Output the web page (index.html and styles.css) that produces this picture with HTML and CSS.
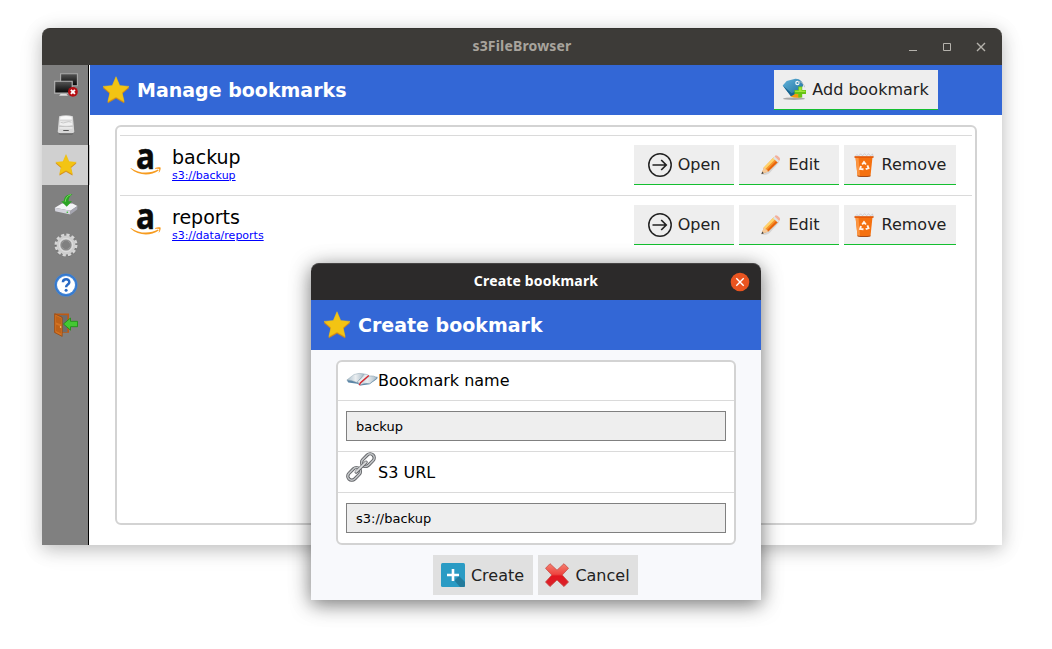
FILE: index.html
```html
<!DOCTYPE html>
<html lang="en">
<head>
<meta charset="utf-8">
<title>s3FileBrowser</title>
<link rel="stylesheet" href="styles.css">
</head>
<body>
<svg class="defs" width="0" height="0">
  <defs>
    <linearGradient id="gScreen" x1="0" y1="0" x2="0" y2="1"><stop offset="0" stop-color="#555"/><stop offset="1" stop-color="#050505"/></linearGradient>
    <linearGradient id="gOrange" x1="0" y1="0" x2="1" y2="1"><stop offset="0" stop-color="#ffc04a"/><stop offset="1" stop-color="#ee6a10"/></linearGradient>
    <linearGradient id="gTag" x1="0" y1="0" x2="1" y2="1"><stop offset="0" stop-color="#62b4dc"/><stop offset="1" stop-color="#1b6b98"/></linearGradient>
    <linearGradient id="gRed" x1="0" y1="0" x2="0" y2="1"><stop offset="0" stop-color="#f58070"/><stop offset=".46" stop-color="#ee4540"/><stop offset=".54" stop-color="#e2161f"/><stop offset="1" stop-color="#d9232c"/></linearGradient>
    <linearGradient id="gPage" x1="0" y1="0" x2="1" y2="0"><stop offset="0" stop-color="#a9bdca"/><stop offset=".5" stop-color="#eceff1"/><stop offset="1" stop-color="#a5b8c5"/></linearGradient>
  </defs>
  <symbol id="star" viewBox="0 0 28 28">
    <path d="M14 2l3.700 8.600 9.300.8-7 6.100 2.100 9.100L14 22l-8.100 4.600L8 17.500l-7-6.100 9.300-.8z" fill="#d58a14" transform="translate(0 .3)" stroke="#d58a14" stroke-width=".5" stroke-linejoin="round"/>
    <path d="M14 .7l3.700 8.900 9.300.8-7 6.100 2.100 9.100L14 21l-8.100 4.600L8 16.500l-7-6.100 9.300-.8z" fill="#f3c413" stroke="#f3c413" stroke-width=".5" stroke-linejoin="round"/>
  </symbol>
  <symbol id="smile" viewBox="0 0 32 30">
    <path d="M.8 20.900C9 26.600 20 27 28 22.600l.7 1C20.500 29.300 8.500 29 .5 21.600z" fill="#f79c20"/>
    <path d="M25 20.900c2.400-1 4.400-.9 5.600-.4.300 1.700-.4 4-2 5.400.4-1.500.9-2.700.6-3.900-1.200-.5-2.600-.4-4.200-.2z" fill="#f79c20"/>
  </symbol>
  <symbol id="open" viewBox="0 0 24 24">
    <circle cx="12" cy="12" r="11.200" fill="none" stroke="#222" stroke-width="1.500"/>
    <path d="M4.500 12h13.500M13.200 7l5 5-5 5" fill="none" stroke="#222" stroke-width="1.700"/>
  </symbol>
  <symbol id="pencil" viewBox="0 0 24 24">
    <path d="M3 21.500c3 1 6 0 8-2l9-10-2-1z" fill="#bbb" opacity=".5"/>
    <path d="M2.600 20.900l2.200-6.500L15 4l4.500 4.400L9.200 18.600z" fill="url(#gOrange)"/>
    <path d="M4.800 14.400L15 4l1.700 1.700L6.300 16z" fill="#ffd46c"/>
    <path d="M9.200 18.600L19.500 8.400 18 7 7.800 17.200z" fill="#e8640c"/>
    <path d="M2.600 20.900l2.200-6.500c1.200.1 1.500.9 1.700 1.800 1.300.2 2.200.8 2.700 2.400z" fill="#f3c99a"/>
    <path d="M2.400 21.200l.8-2.600 1.700 1.700z" fill="#444"/>
    <path d="M14 5l1.600-1.600 4.600 4.500-1.600 1.600z" fill="#dde3e8"/>
    <path d="M15.600 3.400l.9-.9c1.200-.9 5.200 2.600 4.500 4.300l-.8 1.100z" fill="#f3b09b"/>
  </symbol>
  <symbol id="trash" viewBox="0 0 24 24">
    <path d="M3 3.500l2-2 1.500 1.700L8.500.8l2 2 2-2.200 2 2 2.200-1.800 1.700 2L20.500 1l.8 3z" fill="#eee" stroke="#bdb9bd" stroke-width=".6"/>
    <path d="M3.500 4h17l-2 19q-6.500 1.200-13 0z" fill="#f5700e"/>
    <path d="M3.500 4h3l1.500 19-2.500-.2z" fill="#fb9440"/>
    <path d="M2.500 3.200h19v1.700h-19z" fill="#e65a08"/>
    <path d="M5.500 22.600q6.500 1 13 0l-.1.800q-6.400 1-12.800 0z" fill="#a64a18"/>
    <path d="M10.200 11.500l1.800-2.500 1.900 2.500M15.400 12.400l1.100 2.800-2.800 1M11.500 16.200l-3.400-.3.900-2.900" fill="none" stroke="#fff3e8" stroke-width="1.900"/>
  </symbol>
  <symbol id="tag" viewBox="0 0 24 24">
    <ellipse cx="12" cy="20.700" rx="11" ry="1.200" fill="#8a8a8a" opacity=".7"/>
    <path d="M10 11l10 .5-1 7.800q-5 1.300-10.500-.8z" fill="#f29a12"/>
    <path d="M.7 7.500l4-4.500 8.600-2.200c4-.4 8.300 3.400 7.700 7.200l-5.800 6.500L9 18.200z" fill="url(#gTag)"/>
    <path d="M.7 7.500L9 18.200l6.200-3.700-.5-1.800-5 2.600z" fill="#17648f"/>
    <circle cx="15.400" cy="5" r="2.200" fill="#eef7fb"/><circle cx="15.500" cy="5" r="1.100" fill="#3f8eb5"/>
    <path d="M16 3.300q5.500.8 6.700 6" fill="none" stroke="#b6b9bb" stroke-width=".8"/>
    <path d="M16.300 8.600h3.900v3.500H24v3.800h-3.800v3.700h-3.900v-3.700h-3.800v-3.800h3.800z" fill="#68c414"/>
    <path d="M16.900 9.200h2.700v3.500h3.800v1.200h-10.300v-1.200h3.800z" fill="#a0e53a"/>
  </symbol>
  <symbol id="screens" viewBox="0 0 24 24">
    <path d="M6.600.7h16.800v12H6.600z" fill="url(#gScreen)" stroke="#aaa" stroke-width="1.100"/>
    <path d="M7 20.500h5l2 2.300H5z" fill="#ddd"/>
    <path d="M.7 8.300h17.500v11.800H.7z" fill="url(#gScreen)" stroke="#b5b5b5" stroke-width="1.100"/>
    <circle cx="18.900" cy="18.800" r="4.900" fill="#b50d12"/>
    <path d="M16.900 16.800l4 4m0-4l-4 4" stroke="#fff" stroke-width="1.900"/>
  </symbol>
  <symbol id="drives" viewBox="0 0 24 24">
    <path d="M3.500 19.500l2-1h13l2 1-1.500 2.800H5z" fill="#5c5c5c"/>
    <path d="M4.500 2.500Q12 0 19.500 2.500l1.500 16.500q-.5 2-2.500 2h-13q-2 0-2.500-2z" fill="#d8d8d8"/>
    <path d="M6 3q6-1.800 12 0l.5 3h-13z" fill="#f8f8f8"/>
    <path d="M5.500 7.500q6.500 1.300 13 0l.5 4.500q-7 1.500-14 0z" fill="#efefef"/>
    <path d="M6 9q3 1.500 6 0 3-1.300 6 0M4.500 13.300q7.500 1.400 15 0" fill="none" stroke="#bbb" stroke-width=".8"/>
    <path d="M5 15.200h14" stroke="#fafafa"/>
    <path d="M9 18h6" stroke="#555" stroke-width="1.100"/>
  </symbol>
  <symbol id="import" viewBox="0 0 24 24">
    <path d="M.8 14.800L8 10.500h10.500l4.900 2.500-7 4.800z" fill="#f3f3f6"/>
    <path d="M.8 14.800l15.600 3v3.700L1.200 18.300z" fill="#d3d3dc"/>
    <path d="M16.400 17.800l7-4.800-.2 3.500-6.800 5z" fill="#a5a5b0"/>
    <circle cx="13.300" cy="19.300" r=".8" fill="#35c030"/>
    <path d="M18.500 1.200c-4.800-.5-8.500 1.800-8.800 7H7.200l5.500 5.600 5.300-5.600h-3.500c0-2.700 1-5 4-7z" fill="#2ba324"/>
    <path d="M17 1.600c-3.300.8-5.400 3.200-5.800 7.200" fill="none" stroke="#74dc5b"/>
  </symbol>
  <symbol id="gear" viewBox="0 0 24 24">
    <circle cx="12" cy="12.600" r="10.100" fill="none" stroke="#4e4e4e" stroke-width="2.700" stroke-dasharray="3.200 2.088" opacity=".6"/>
    <circle cx="12" cy="12" r="10" fill="none" stroke="#d6d6d6" stroke-width="3" stroke-dasharray="3.200 2.036"/>
    <circle cx="12" cy="12" r="6.900" fill="none" stroke="#cecece" stroke-width="5"/>
    <circle cx="12" cy="12" r="4.800" fill="none" stroke="#8d8d8d" stroke-width="1.600"/>
    <circle cx="12" cy="12" r="6.700" fill="none" stroke="#e4e4e4" stroke-width=".7"/>
  </symbol>
  <symbol id="help" viewBox="0 0 24 24">
    <circle cx="12" cy="12" r="11.500" fill="#4286d8"/>
    <circle cx="12" cy="12" r="9" fill="#fff"/>
    <circle cx="12" cy="12" r="10.600" fill="none" stroke="#2e70c5" stroke-width=".8"/>
    <path d="M8.900 9.300c.2-4 6.500-3.900 6.400-.1 0 2.400-3.200 2.300-3.200 5" fill="none" stroke="#2869c4" stroke-width="2.500"/>
    <circle cx="12.100" cy="17.300" r="1.500" fill="#2869c4"/>
  </symbol>
  <symbol id="exit" viewBox="0 0 24 24">
    <path d="M.5.500h14.500v19.300H.5z" fill="#bd5a14"/>
    <path d="M2.500 2.200h10.800v17H2.500z" fill="#6d6d6d"/>
    <path d="M.7.800l7.500 3.600v19L.7 19.500z" fill="#d37323" stroke="#91430e" stroke-width=".7"/>
    <path d="M2 3l5 2.300v6L2 9.500zM2 11.500l5 2v7L2 18z" fill="#be6118"/>
    <circle cx="6.600" cy="14" r=".8" fill="#ffe08a"/>
    <path d="M9.500 11l7-6v3.300h7v5.400h-7v3.500z" fill="#43c832" stroke="#218e1a" stroke-width=".9"/>
  </symbol>
  <symbol id="book" viewBox="0 0 32 16">
    <path d="M.8 8.300l1.500 2.200 9 1.200 3.200 1.700 9-1.200 7.700-5.400.2-2z" fill="#5b86a7"/>
    <path d="M.8 8L8 2.500Q13 .5 18.500 2l-7.400 8.500Q6 8.200.8 8z" fill="url(#gPage)" stroke="#8299a8" stroke-width=".4"/>
    <path d="M11.100 10.600L18.500 2q3.500.3 5 2 4-.7 7.800 1.700l-7.600 6q-5-1.100-9.400 1.400z" fill="url(#gPage)" stroke="#7f9bad" stroke-width=".5"/>
    <path d="M12 9.500l8.200-6.800 2.600 1.200-8.400 8.600z" fill="#e9ecee"/>
    <path d="M23.500 4.100l-8.900 7.200" stroke="#96a6b2" stroke-width=".6"/>
    <path d="M22.800 3.400l-8.500 7.500-.9 2.300" fill="none" stroke="#d7252d" stroke-width="1.300"/>
  </symbol>
  <symbol id="chain" viewBox="0 0 30 30">
    <g transform="rotate(-45 15 15)" fill="none">
      <rect x="-2" y="11" width="14.500" height="8" rx="4" stroke="#606266" stroke-width="3.300"/>
      <rect x="-2" y="11" width="14.500" height="8" rx="4" stroke="#c0c3c5" stroke-width="1.600"/>
      <rect x="17.500" y="11" width="14.500" height="8" rx="4" stroke="#606266" stroke-width="3.300"/>
      <rect x="17.500" y="11" width="14.500" height="8" rx="4" stroke="#c0c3c5" stroke-width="1.600"/>
      <path d="M8 15.200h14" stroke="#606266" stroke-width="3.300" stroke-linecap="round"/>
      <path d="M8 15h14" stroke="#dcddde" stroke-width="1.700" stroke-linecap="round"/>
    </g>
  </symbol>
  <symbol id="plus" viewBox="0 0 24 24">
    <rect width="24" height="24" rx="1.500" fill="#2a9bc4"/>
    <path d="M13.500 17.500L18 13l6 6v3.500q0 1.500-1.500 1.500H19z" fill="#237b9c"/>
    <path d="M12 6v12M6 12h12" stroke="#fff" stroke-width="2.600"/>
  </symbol>
  <symbol id="cross" viewBox="0 0 24 24">
    <path d="M5 .7l7 6.500 7-6.500 4.500 4.600-6.300 6.700 6.300 7-4.500 4.600L12 17l-7 6.600L.5 19l6.300-7L.5 5.300z" fill="url(#gRed)" stroke="#c74a44" stroke-width=".8" stroke-linejoin="round"/>
  </symbol>
</svg>

<main class="window">
  <header class="titlebar">
    <span class="title">s3FileBrowser</span>
    <svg class="controls" width="80" height="12" viewBox="0 0 80 12" fill="none" stroke="#b5b2ac">
      <path d="M1 9.500h8"/><path d="M35.500 2.500h7v7h-7z"/><path d="M69 2l8 8m0-8l-8 8" stroke-width="1.400"/>
    </svg>
  </header>
  <div class="body">
    <nav class="sidebar">
      <a class="nav"><svg width="24" height="24"><use href="#screens"/></svg></a>
      <a class="nav"><svg width="22" height="22"><use href="#drives"/></svg></a>
      <a class="nav active"><svg width="22" height="22"><use href="#star"/></svg></a>
      <a class="nav"><svg width="24" height="24"><use href="#import"/></svg></a>
      <a class="nav"><svg width="24" height="24"><use href="#gear"/></svg></a>
      <a class="nav"><svg width="24" height="24"><use href="#help"/></svg></a>
      <a class="nav"><svg width="24" height="24"><use href="#exit"/></svg></a>
    </nav>
    <section class="content">
      <div class="banner">
        <svg width="28" height="28"><use href="#star"/></svg>
        <h1>Manage bookmarks</h1>
        <button class="btn add"><svg width="24" height="24"><use href="#tag"/></svg>Add bookmark</button>
      </div>
      <div class="list">
        <div class="row">
          <svg class="aws" width="32" height="30" viewBox="0 0 32 30"><text x="6" y="21.500" class="aws-letter" textLength="19" lengthAdjust="spacingAndGlyphs">a</text><use href="#smile"/></svg>
          <div class="info"><span class="name">backup</span><a class="url">s3://backup</a></div>
          <button class="btn"><svg width="24" height="24"><use href="#open"/></svg>Open</button>
          <button class="btn edit"><svg width="24" height="24"><use href="#pencil"/></svg>Edit</button>
          <button class="btn remove"><svg width="24" height="24"><use href="#trash"/></svg>Remove</button>
        </div>
        <div class="row">
          <svg class="aws" width="32" height="30" viewBox="0 0 32 30"><text x="6" y="21.500" class="aws-letter" textLength="19" lengthAdjust="spacingAndGlyphs">a</text><use href="#smile"/></svg>
          <div class="info"><span class="name">reports</span><a class="url">s3://data/reports</a></div>
          <button class="btn"><svg width="24" height="24"><use href="#open"/></svg>Open</button>
          <button class="btn edit"><svg width="24" height="24"><use href="#pencil"/></svg>Edit</button>
          <button class="btn remove"><svg width="24" height="24"><use href="#trash"/></svg>Remove</button>
        </div>
      </div>
    </section>
  </div>
</main>

<section class="dialog">
  <header class="titlebar dark">
    <span class="title">Create bookmark</span>
    <svg class="close" width="20" height="20" viewBox="0 0 20 20"><circle cx="10" cy="10" r="9.300" fill="#e95420"/><path d="M6.300 6.300l7.400 7.400m0-7.400l-7.400 7.400" stroke="#fff" stroke-width="1.400"/></svg>
  </header>
  <div class="banner">
    <svg width="28" height="28"><use href="#star"/></svg>
    <h1>Create bookmark</h1>
  </div>
  <div class="form">
    <div class="label first"><svg width="32" height="16"><use href="#book"/></svg>Bookmark name</div>
    <div class="field"><div class="input">backup</div></div>
    <div class="label second"><svg width="30" height="30"><use href="#chain"/></svg>S3 URL</div>
    <div class="field last"><div class="input">s3://backup</div></div>
  </div>
  <div class="actions">
    <button class="btn"><svg width="24" height="24"><use href="#plus"/></svg>Create</button>
    <button class="btn"><svg width="24" height="24"><use href="#cross"/></svg>Cancel</button>
  </div>
</section>
</body>
</html>
```

FILE: styles.css
```css
* { box-sizing: border-box; }
body { margin: 0; width: 1052px; height: 649px; overflow: hidden; position: relative; background: #fff; font-family: "DejaVu Sans", sans-serif; color: #000; }
svg { display: block; flex: none; }
.defs { position: absolute; }
.window, .dialog { position: absolute; display: flex; flex-direction: column; border-radius: 8px 8px 0 0; }
.window { left: 42px; top: 28px; width: 960px; height: 517px; background: #fff; box-shadow: 0 4px 18px rgba(0,0,0,.24), 0 4px 32px rgba(0,0,0,.05); }
.dialog { left: 311px; top: 263px; width: 450px; height: 337px; background: #f8f9fc; box-shadow: 0 4px 19px rgba(0,0,0,.5), 0 4px 30px rgba(0,0,0,.08); }
.titlebar { position: relative; flex: none; height: 37px; padding-bottom: 1px; display: flex; align-items: center; justify-content: center; background: #3d3b38; border-top: 1px solid #353330; border-radius: 8px 8px 0 0; color: #a8a49d; font: bold 14px/20px "Noto Sans", sans-serif; letter-spacing: .17px; }
.titlebar .title { margin-bottom: 2px; }
.titlebar.dark { background: #2c2a2a; border-color: #464444; color: #fff; }
.controls { position: absolute; right: 14px; top: 12px; }
.close { position: absolute; right: 11px; top: 8px; }
.body { flex: 1; display: flex; }
.sidebar { width: 48px; padding-right: 2px; background: linear-gradient(90deg, #808080 46px, #000 46px 47px, #fff 47px); }
.nav { height: 40px; width: 48px; display: flex; align-items: center; justify-content: center; }
.nav.active { background: linear-gradient(90deg, #d0d0d0 46px, #000 46px 47px, #d0d0d0 47px); }
.content { flex: 1; }
.banner { height: 50px; flex: none; display: flex; align-items: center; padding: 0 64px 0 12px; background: #3367d6; color: #fff; }
.banner h1 { margin: 0 0 0 7px; font-size: 19px; font-weight: bold; white-space: nowrap; }
.btn { appearance: none; width: 100px; height: 40px; margin: 0; padding: 0; display: flex; align-items: center; justify-content: center; gap: 6px; border: 0; border-bottom: 1px solid #14bf30; background: #eee; color: #222; font: 16px "DejaVu Sans", sans-serif; white-space: nowrap; }
.btn.add { width: 164px; margin-left: auto; }
.btn.add svg { margin-left: -1px; }
.btn.edit { gap: 6px; }
.btn.remove { width: 112px; }
.btn.remove svg { margin-left: -2px; }
.list { margin: 10px 25px 0; height: 400px; padding: 8px 3px; border: 2px solid #d3d3d3; border-radius: 6px; }
.row { height: 60px; padding: 0 16px 1px 10px; display: flex; align-items: center; gap: 5px; border-top: 1px solid #dadada; }
.aws { margin-bottom: 7px; overflow: visible; }
.info { flex: 1; display: flex; flex-direction: column; margin: 0 0 2px 5px; }
.name { font-size: 19px; line-height: 22px; }
.url { font-size: 11px; line-height: 15px; color: #00f; text-decoration: underline; }
.aws-letter { font: bold 35px "Open Sans", sans-serif; fill: #0a0a0a; stroke: #0a0a0a; stroke-width: .6px; }
.form { margin: 10px 25px 0; height: 185px; background: #fff; border: 2px solid #d3d3d3; border-radius: 6px; }
.label { display: flex; align-items: center; padding-left: 8px; border-bottom: 1px solid #dadada; font-size: 16px; }
.label.first { height: 39px; padding-bottom: 2px; }
.label.second { height: 41px; gap: 2px; }
.label.second svg { margin-bottom: 10px; }
.field { height: 51px; padding: 10px 8px; border-bottom: 1px solid #dadada; }
.field.last { border: 0; }
.input { height: 30px; border: 1px solid #808080; background: #eee; padding-left: 9px; font-size: 13px; line-height: 29px; }
.actions { display: flex; justify-content: center; gap: 5px; padding: 10px 2px 0 0; }
.actions .btn { background: #e0e0e0; border: 0; }
```
